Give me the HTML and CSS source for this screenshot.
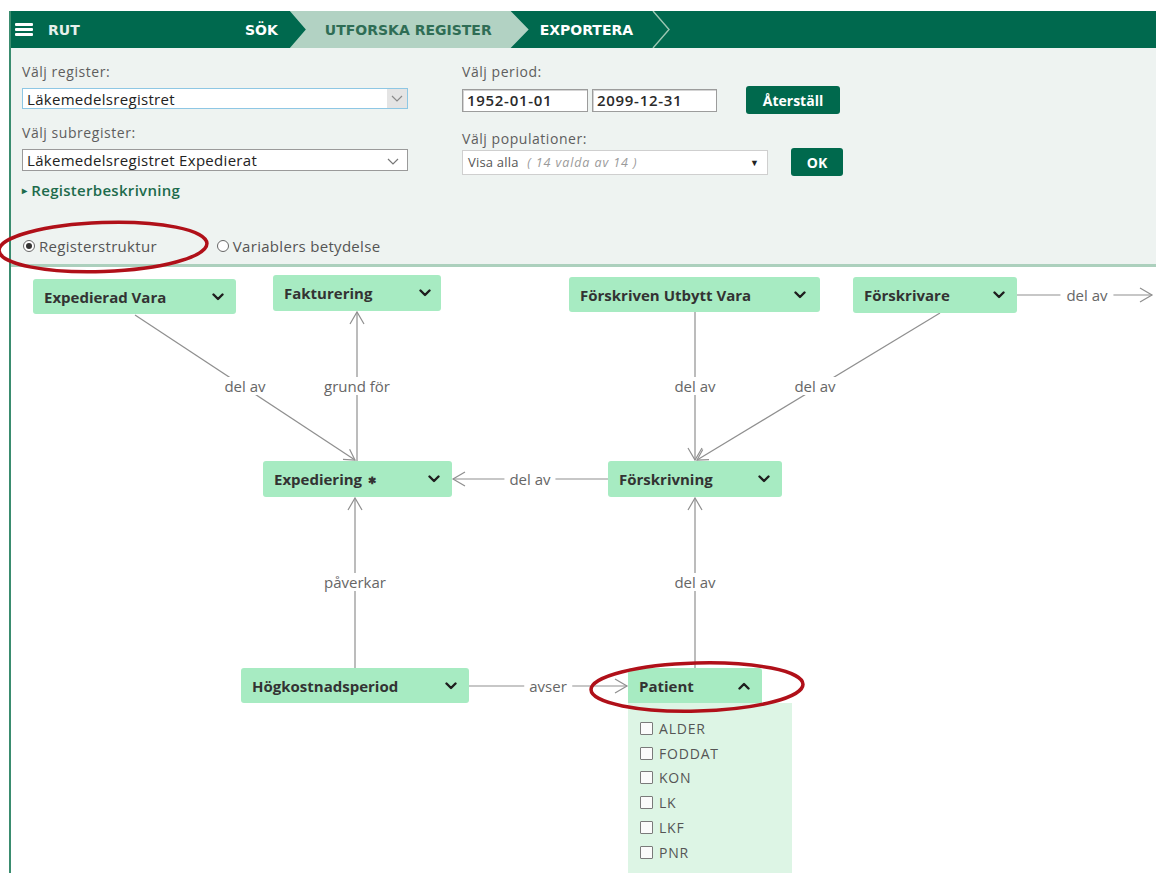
FILE: index.html
```html
<!DOCTYPE html>
<html lang="sv">
<head>
<meta charset="utf-8">
<title>RUT – Utforska register</title>
<link rel="stylesheet" href="styles.css">
</head>
<body>
<div class="app">
  <header class="topbar">
    <div class="brand">
      <span class="burger"><i></i><i></i><i></i></span>
      <span class="brand-name">RUT</span>
    </div>
    <nav class="steps">
      <span class="step step-done">SÖK</span>
      <span class="step step-current">UTFORSKA REGISTER</span>
      <span class="step step-next">EXPORTERA
        <svg class="step-chevron" width="20" height="37" viewBox="0 0 20 37"><polyline points="2,0 18,18.5 2,37" fill="none" stroke="#9cc6b2" stroke-width="1.4"/></svg>
      </span>
    </nav>
  </header>

  <section class="controls">
    <div class="control-cols">
      <div class="col col-left">
        <div class="field-label">Välj register:</div>
        <div class="select select-focus">
          <span class="select-text">Läkemedelsregistret</span>
          <span class="select-btn"><svg width="12" height="8" viewBox="0 0 12 8"><polyline points="1,1 6,6 11,1" fill="none" stroke="#8a8a8a" stroke-width="1.2"/></svg></span>
        </div>
        <div class="field-label gap">Välj subregister:</div>
        <div class="select select-plain">
          <span class="select-text">Läkemedelsregistret Expedierat</span>
          <span class="select-arrow"><svg width="12" height="8" viewBox="0 0 12 8"><polyline points="1,1 6,6 11,1" fill="none" stroke="#777" stroke-width="1.2"/></svg></span>
        </div>
        <a class="desc-link"><span class="caret">&#9656;</span>Registerbeskrivning</a>
      </div>
      <div class="col col-right">
        <div class="field-label">Välj period:</div>
        <div class="field-row period-row">
          <input class="date" type="text" value="1952-01-01" readonly>
          <input class="date" type="text" value="2099-12-31" readonly>
          <button class="btn btn-reset" type="button">Återställ</button>
        </div>
        <div class="field-label gap-pop">Välj populationer:</div>
        <div class="field-row">
          <div class="select select-pop">
            <span class="pop-text">Visa alla <em>( 14 valda av 14 )</em></span>
            <span class="pop-arrow">&#9660;</span>
          </div>
          <button class="btn btn-ok" type="button">OK</button>
        </div>
      </div>
    </div>
    <div class="view-toggle">
      <label class="radio"><span class="dot checked"></span>Registerstruktur</label>
      <label class="radio"><span class="dot"></span>Variablers betydelse</label>
    </div>
  </section>

  <main class="diagram">
    <svg class="edges" width="1145" height="606" viewBox="11 267 1145 606">
      <g stroke="#8f8f8f" stroke-width="1.2" fill="none">
        <!-- Expedierad Vara -> Expediering -->
        <line x1="135" y1="315" x2="355" y2="460"/>
        <polyline points="349.6,449.3 355,460 343,459.3"/>
        <!-- Expediering -> Fakturering -->
        <line x1="357" y1="461" x2="357" y2="312"/>
        <polyline points="350,324 357,312 364,324"/>
        <!-- Förskriven Utbytt Vara -> Förskrivning -->
        <line x1="695" y1="312" x2="695" y2="460"/>
        <polyline points="688,448 695,460 702,448"/>
        <!-- Förskrivare -> Förskrivning -->
        <line x1="940" y1="313" x2="697" y2="460"/>
        <polyline points="709,459.7 697,460 702.8,449.5"/>
        <!-- Förskrivning -> Expediering -->
        <line x1="608" y1="479" x2="453" y2="479"/>
        <polyline points="465,472 453,479 465,486"/>
        <!-- Högkostnadsperiod -> Expediering -->
        <line x1="355" y1="668" x2="355" y2="498"/>
        <polyline points="348,510 355,498 362,510"/>
        <!-- Patient -> Förskrivning -->
        <line x1="695" y1="668" x2="695" y2="498"/>
        <polyline points="688,510 695,498 702,510"/>
        <!-- Högkostnadsperiod -> Patient -->
        <line x1="469" y1="686" x2="627" y2="686"/>
        <polyline points="615,679 627,686 615,693"/>
        <!-- Förskrivare -> (utanför) -->
        <line x1="1017" y1="295" x2="1152" y2="295"/>
        <polyline points="1140,288 1152,295 1140,302"/>
      </g>
    </svg>

    <span class="edge-label l-exp-vara">del av</span>
    <span class="edge-label l-fakt">grund för</span>
    <span class="edge-label l-utbytt">del av</span>
    <span class="edge-label l-forskrivare">del av</span>
    <span class="edge-label l-forskrivning">del av</span>
    <span class="edge-label l-paverkar">påverkar</span>
    <span class="edge-label l-patient">del av</span>
    <span class="edge-label l-avser">avser</span>
    <span class="edge-label l-out">del av</span>

    <div class="node n-expvara"><span>Expedierad Vara</span><svg class="chev" width="12" height="8" viewBox="0 0 12 8"><polyline points="1.5,1.5 6,6 10.5,1.5"/></svg></div>
    <div class="node n-fakt"><span>Fakturering</span><svg class="chev" width="12" height="8" viewBox="0 0 12 8"><polyline points="1.5,1.5 6,6 10.5,1.5"/></svg></div>
    <div class="node n-utbytt"><span>Förskriven Utbytt Vara</span><svg class="chev" width="12" height="8" viewBox="0 0 12 8"><polyline points="1.5,1.5 6,6 10.5,1.5"/></svg></div>
    <div class="node n-forskrivare"><span>Förskrivare</span><svg class="chev" width="12" height="8" viewBox="0 0 12 8"><polyline points="1.5,1.5 6,6 10.5,1.5"/></svg></div>
    <div class="node n-expediering"><span>Expediering <b class="star">&#10033;</b></span><svg class="chev" width="12" height="8" viewBox="0 0 12 8"><polyline points="1.5,1.5 6,6 10.5,1.5"/></svg></div>
    <div class="node n-forskrivning"><span>Förskrivning</span><svg class="chev" width="12" height="8" viewBox="0 0 12 8"><polyline points="1.5,1.5 6,6 10.5,1.5"/></svg></div>
    <div class="node n-hogkost"><span>Högkostnadsperiod</span><svg class="chev" width="12" height="8" viewBox="0 0 12 8"><polyline points="1.5,1.5 6,6 10.5,1.5"/></svg></div>
    <div class="node n-patient"><span>Patient</span><svg class="chev" width="12" height="8" viewBox="0 0 12 8"><polyline points="1.5,6.5 6,2 10.5,6.5"/></svg></div>

    <ul class="var-list">
      <li><span class="box"></span>ALDER</li>
      <li><span class="box"></span>FODDAT</li>
      <li><span class="box"></span>KON</li>
      <li><span class="box"></span>LK</li>
      <li><span class="box"></span>LKF</li>
      <li><span class="box"></span>PNR</li>
    </ul>
  </main>
</div>

<svg class="marks" width="1156" height="873" viewBox="0 0 1156 873">
  <g fill="none" stroke="#b01019" stroke-width="3.5">
    <ellipse cx="103" cy="247" rx="104" ry="24.5" transform="rotate(-2 103 247)"/>
    <ellipse cx="697" cy="687" rx="106" ry="24" transform="rotate(-1.5 697 687)"/>
  </g>
</svg>
</body>
</html>
```

FILE: styles.css
```css
* { box-sizing: border-box; }

html, body {
  margin: 0;
  padding: 0;
  background: #ffffff;
}

body {
  position: relative;
  width: 1156px;
  height: 873px;
  overflow: hidden;
  font-family: "Open Sans", "Noto Sans", "Liberation Sans", sans-serif;
  color: #333;
}

.app {
  margin: 11px 0 0 9px;
  border-left: 2px solid #3a8c6f;
  height: 862px;
  display: flex;
  flex-direction: column;
}

/* ---------- top navigation ---------- */
.topbar {
  height: 37px;
  background: #00694e;
  display: flex;
  align-items: stretch;
  color: #fff;
  flex: none;
  font-family: "DejaVu Sans", "Open Sans", sans-serif;
}

.brand {
  width: 234px;
  display: flex;
  align-items: center;
  padding-left: 4px;
  gap: 15px;
}

.burger {
  width: 18px;
  height: 13px;
  display: flex;
  flex-direction: column;
  justify-content: space-between;
}
.burger i {
  display: block;
  height: 3px;
  background: #fff;
  border-radius: 1px;
}

.brand-name {
  font-weight: 700;
  font-size: 14px;
  color: #e6f0eb;
}

.steps {
  display: flex;
  align-items: stretch;
}

.step {
  display: flex;
  align-items: center;
  font-weight: 700;
  font-size: 14px;
  padding-top: 1px;
}

.step-done {
  padding-right: 12px;
}

.step-current {
  background: #b2d2c3;
  color: #2f6d55;
  padding: 1px 37px 0 35px;
  clip-path: polygon(0 0, calc(100% - 18px) 0, 100% 50%, calc(100% - 18px) 100%, 0 100%, 16px 50%);
}

.step-next {
  padding-left: 11px;
}

.step-chevron {
  margin-left: 18px;
  display: block;
  margin-top: -1px;
}

/* ---------- control panel ---------- */
.controls {
  flex: none;
  height: 219px;
  background: #eef3f1;
  border-bottom: 3px solid #acd0bd;
  padding: 15px 0 0 11px;
}

.control-cols {
  display: flex;
  gap: 54px;
  height: 174px;
}

.col-left { width: 386px; }
.col-right { width: 400px; }

.field-label {
  font-size: 14px;
  line-height: 18px;
  letter-spacing: 0.55px;
  color: #5e5e5e;
  margin-bottom: 7px;
}
.field-label.gap { margin-top: 15px; }
.col-right .field-label { margin-bottom: 5px; }
.col-right .field-label.gap-pop { margin-top: 16px; margin-bottom: 0; }

.select {
  display: flex;
  align-items: center;
  background: #fff;
  font-size: 15px;
  letter-spacing: 0.3px;
  color: #222;
}

.select-focus {
  height: 21px;
  border: 1px solid #8ec7e4;
  padding-left: 4px;
}
.select-focus .select-text { flex: 1; }
.select-btn {
  width: 20px;
  height: 100%;
  background: #e4e4e4;
  display: flex;
  align-items: center;
  justify-content: center;
}

.select-plain {
  height: 22px;
  border: 1px solid #9a9a9a;
  padding: 0 8px 0 4px;
}
.select-plain .select-text { flex: 1; }

.desc-link {
  display: flex;
  align-items: center;
  margin-top: 10px;
  font-size: 15px;
  line-height: 18px;
  letter-spacing: 0.3px;
  font-weight: 600;
  color: #1d6b4c;
}
.caret {
  font-size: 10px;
  margin-right: 4px;
  color: #1d6b4c;
}

.field-row {
  display: flex;
  align-items: center;
  height: 28px;
}

.date {
  width: 126px;
  height: 23px;
  border: 1px solid #9c9c9c;
  box-shadow: inset 1px 1px 0 #d4d4d4;
  padding: 0 4px;
  font-family: inherit;
  font-size: 15px;
  letter-spacing: 0.7px;
  font-weight: 600;
  color: #2a2a2a;
  background: #fff;
  margin: 0 4px 0 0;
  outline: none;
}
.date + .date { width: 125px; }

.btn {
  height: 28px;
  border: none;
  border-radius: 3px;
  background: #00694d;
  color: #fff;
  font-family: inherit;
  font-size: 14px;
  font-weight: 700;
  padding: 0;
}
.btn-reset { width: 94px; margin-left: 25px; }
.btn-ok { width: 52px; margin-left: 23px; }

.select-pop {
  width: 306px;
  height: 25px;
  border: 1px solid #cfcfcf;
  padding: 0 8px 0 5px;
  font-size: 13px;
  letter-spacing: 0.2px;
  color: #555;
}
.pop-text { flex: 1; }
.pop-text em {
  color: #9a9a9a;
  font-size: 12.5px;
  letter-spacing: 0.9px;
  margin-left: 5px;
}
.pop-arrow {
  font-size: 9px;
  color: #222;
}

.view-toggle {
  display: flex;
  gap: 60px;
  padding-left: 1px;
}

.radio {
  display: flex;
  align-items: center;
  gap: 4px;
  font-size: 15px;
  line-height: 18px;
  letter-spacing: 0.3px;
  color: #555;
}

.dot {
  width: 12px;
  height: 12px;
  border-radius: 50%;
  border: 1px solid #666;
  background: #fff;
  display: flex;
  align-items: center;
  justify-content: center;
}
.dot.checked::after {
  content: "";
  width: 6px;
  height: 6px;
  border-radius: 50%;
  background: #333;
}

/* ---------- structure diagram ---------- */
.diagram {
  position: relative;
  flex: 1;
  overflow: hidden;
  background: #fff;
}

.edges {
  position: absolute;
  left: 0;
  top: 0;
}

.edge-label {
  position: absolute;
  transform: translate(-50%, -50%);
  background: #fff;
  padding: 0 5px;
  font-size: 15px;
  line-height: 18px;
  color: #666;
  white-space: nowrap;
}
/* label centres, diagram coordinates */
.l-exp-vara    { left: 234px; top: 119px; }
.l-fakt        { left: 346px; top: 119px; }
.l-utbytt      { left: 684px; top: 119px; }
.l-forskrivare { left: 804px; top: 119px; }
.l-forskrivning{ left: 519px; top: 212px; }
.l-paverkar    { left: 344px; top: 315px; }
.l-patient     { left: 684px; top: 315px; }
.l-avser       { left: 537px; top: 419px; }
.l-out         { left: 1076px; top: 28px; padding: 0 6px; }

.node {
  position: absolute;
  display: flex;
  align-items: center;
  justify-content: space-between;
  height: 36px;
  padding: 0 12px 0 11px;
  background: #a7ebc2;
  border-radius: 3px;
  font-size: 15px;
  font-weight: 700;
  color: #333;
  white-space: nowrap;
}
.node .chev {
  fill: none;
  stroke: #1e1e1e;
  stroke-width: 2.4;
  stroke-linecap: round;
  stroke-linejoin: round;
}
.star {
  font-size: 10px;
  vertical-align: 1px;
  margin-left: 2px;
}

.n-expvara     { left: 22px;  top: 12px;  width: 203px; height: 35px; }
.n-fakt        { left: 262px; top: 8px;   width: 168px; padding-right: 10px; }
.n-utbytt      { left: 558px; top: 10px;  width: 251px; height: 35px; padding-right: 14px; }
.n-forskrivare { left: 842px; top: 10px;  width: 164px; padding-right: 12px; }
.n-expediering { left: 252px; top: 194px; width: 189px; }
.n-forskrivning{ left: 597px; top: 194px; width: 174px; }
.n-hogkost     { left: 230px; top: 401px; width: 228px; height: 35px; }
.n-patient     { left: 617px; top: 401px; width: 134px; height: 35px; border-radius: 3px 3px 0 0; }

.var-list {
  position: absolute;
  left: 617px;
  top: 436px;
  width: 164px;
  height: 190px;
  margin: 0;
  padding: 13px 0 0 12px;
  list-style: none;
  background: #ddf5e5;
}
.var-list li {
  display: flex;
  align-items: center;
  height: 24.8px;
  gap: 6px;
  font-size: 14px;
  letter-spacing: 0.8px;
  color: #555;
}
.box {
  width: 13px;
  height: 13px;
  border: 1.5px solid #7a7a7a;
  border-radius: 1px;
  background: #fbfbfb;
}

/* ---------- annotation overlay ---------- */
.marks {
  position: absolute;
  left: 0;
  top: 0;
  pointer-events: none;
}
```
